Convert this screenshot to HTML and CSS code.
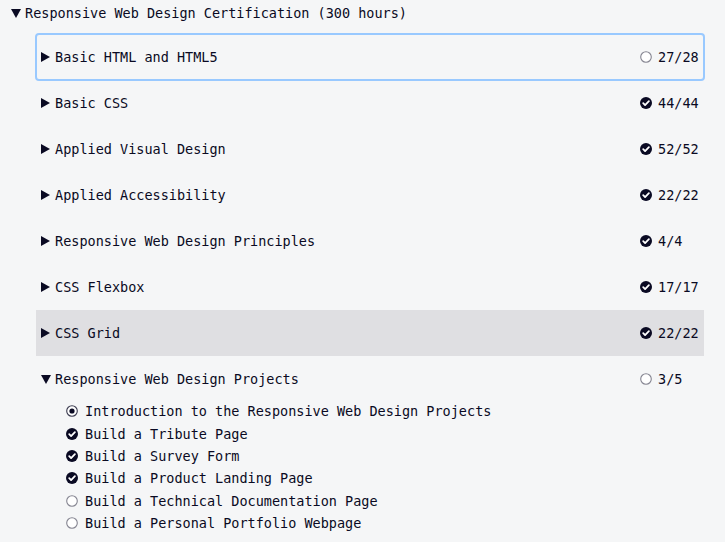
FILE: index.html
```html
<!DOCTYPE html>
<html>
<head>
<meta charset="utf-8">
<link rel="stylesheet" href="styles.css">
</head>
<body>
<div class="cert">
  <div class="cert-head">
    <svg class="tri-down" width="10" height="9" viewBox="0 0 10 9"><path d="M0 0H10L5 9Z"/></svg>
    <span>Responsive Web Design Certification (300 hours)</span>
  </div>
  <div class="blocks">
    <div class="block focused">
      <div class="block-title"><svg class="tri-right" width="9" height="10" viewBox="0 0 9 10"><path d="M0 0L9 5L0 10Z"/></svg><span>Basic HTML and HTML5</span></div>
      <div class="block-count"><svg class="ico" width="12" height="12" viewBox="0 0 12 12"><circle cx="6" cy="6" r="5.3" class="empty"/></svg><span>27/28</span></div>
    </div>
    <div class="block">
      <div class="block-title"><svg class="tri-right" width="9" height="10" viewBox="0 0 9 10"><path d="M0 0L9 5L0 10Z"/></svg><span>Basic CSS</span></div>
      <div class="block-count"><svg class="ico" width="12" height="12" viewBox="0 0 12 12"><circle cx="6" cy="6" r="6" class="full"/><path d="M3.2 6.2L5.1 8.1L8.9 4.2" class="tick"/></svg><span>44/44</span></div>
    </div>
    <div class="block">
      <div class="block-title"><svg class="tri-right" width="9" height="10" viewBox="0 0 9 10"><path d="M0 0L9 5L0 10Z"/></svg><span>Applied Visual Design</span></div>
      <div class="block-count"><svg class="ico" width="12" height="12" viewBox="0 0 12 12"><circle cx="6" cy="6" r="6" class="full"/><path d="M3.2 6.2L5.1 8.1L8.9 4.2" class="tick"/></svg><span>52/52</span></div>
    </div>
    <div class="block">
      <div class="block-title"><svg class="tri-right" width="9" height="10" viewBox="0 0 9 10"><path d="M0 0L9 5L0 10Z"/></svg><span>Applied Accessibility</span></div>
      <div class="block-count"><svg class="ico" width="12" height="12" viewBox="0 0 12 12"><circle cx="6" cy="6" r="6" class="full"/><path d="M3.2 6.2L5.1 8.1L8.9 4.2" class="tick"/></svg><span>22/22</span></div>
    </div>
    <div class="block">
      <div class="block-title"><svg class="tri-right" width="9" height="10" viewBox="0 0 9 10"><path d="M0 0L9 5L0 10Z"/></svg><span>Responsive Web Design Principles</span></div>
      <div class="block-count"><svg class="ico" width="12" height="12" viewBox="0 0 12 12"><circle cx="6" cy="6" r="6" class="full"/><path d="M3.2 6.2L5.1 8.1L8.9 4.2" class="tick"/></svg><span>4/4</span></div>
    </div>
    <div class="block">
      <div class="block-title"><svg class="tri-right" width="9" height="10" viewBox="0 0 9 10"><path d="M0 0L9 5L0 10Z"/></svg><span>CSS Flexbox</span></div>
      <div class="block-count"><svg class="ico" width="12" height="12" viewBox="0 0 12 12"><circle cx="6" cy="6" r="6" class="full"/><path d="M3.2 6.2L5.1 8.1L8.9 4.2" class="tick"/></svg><span>17/17</span></div>
    </div>
    <div class="block hovered">
      <div class="block-title"><svg class="tri-right" width="9" height="10" viewBox="0 0 9 10"><path d="M0 0L9 5L0 10Z"/></svg><span>CSS Grid</span></div>
      <div class="block-count"><svg class="ico" width="12" height="12" viewBox="0 0 12 12"><circle cx="6" cy="6" r="6" class="full"/><path d="M3.2 6.2L5.1 8.1L8.9 4.2" class="tick"/></svg><span>22/22</span></div>
    </div>
    <div class="block open">
      <div class="block-title tight"><svg class="tri-down-sm" width="10" height="9" viewBox="0 0 10 9"><path d="M0 0H10L5 9Z"/></svg><span>Responsive Web Design Projects</span></div>
      <div class="block-count"><svg class="ico" width="12" height="12" viewBox="0 0 12 12"><circle cx="6" cy="6" r="5.3" class="empty"/></svg><span>3/5</span></div>
    </div>
    <ul class="challenges">
      <li><svg class="ico" width="12" height="12" viewBox="0 0 12 12"><circle cx="6" cy="6" r="5.3" class="empty dark"/><circle cx="6" cy="6" r="2.6" class="dot"/></svg><span>Introduction to the Responsive Web Design Projects</span></li>
      <li><svg class="ico" width="12" height="12" viewBox="0 0 12 12"><circle cx="6" cy="6" r="6" class="full"/><path d="M3.2 6.2L5.1 8.1L8.9 4.2" class="tick"/></svg><span>Build a Tribute Page</span></li>
      <li><svg class="ico" width="12" height="12" viewBox="0 0 12 12"><circle cx="6" cy="6" r="6" class="full"/><path d="M3.2 6.2L5.1 8.1L8.9 4.2" class="tick"/></svg><span>Build a Survey Form</span></li>
      <li><svg class="ico" width="12" height="12" viewBox="0 0 12 12"><circle cx="6" cy="6" r="6" class="full"/><path d="M3.2 6.2L5.1 8.1L8.9 4.2" class="tick"/></svg><span>Build a Product Landing Page</span></li>
      <li><svg class="ico" width="12" height="12" viewBox="0 0 12 12"><circle cx="6" cy="6" r="5.3" class="empty"/></svg><span>Build a Technical Documentation Page</span></li>
      <li><svg class="ico" width="12" height="12" viewBox="0 0 12 12"><circle cx="6" cy="6" r="5.3" class="empty"/></svg><span>Build a Personal Portfolio Webpage</span></li>
    </ul>
  </div>
</div>
</body>
</html>
```
FILE: styles.css
```css
html, body {
  margin: 0;
  padding: 0;
  background: #f5f6f7;
}
body {
  font-family: "DejaVu Sans Mono", "Liberation Mono", monospace;
  font-size: 13.5px;
  color: #0a0a23;
  width: 725px;
  height: 542px;
  overflow: hidden;
}
.cert-head {
  display: flex;
  align-items: center;
  height: 26px;
  padding-left: 11px;
  gap: 4px;
}
.tri-down, .tri-down-sm, .tri-right {
  fill: #0a0a23;
  flex: none;
}
.blocks {
  margin: 8px 21px 0 36px;
}
.block {
  display: flex;
  align-items: center;
  justify-content: space-between;
  height: 46px;
  padding: 0 6px 0 5px;
}
.block.focused {
  outline: 2px solid #99c9ff;
  outline-offset: -1px;
  border-radius: 3px;
}
.block.hovered {
  background: #dfdfe2;
}
.block-title {
  display: flex;
  align-items: center;
  gap: 5px;
}
.block-title.tight {
  gap: 4px;
}
.block-count {
  display: flex;
  align-items: center;
  justify-content: flex-start;
  width: 58px;
  gap: 6px;
}
.ico {
  flex: none;
  display: block;
}
.ico .full { fill: #0a0a23; }
.ico .tick { fill: none; stroke: #fff; stroke-width: 1.8; stroke-linecap: round; stroke-linejoin: round; }
.ico .empty { fill: #fff; stroke: #858591; stroke-width: 1.1; }
.ico .empty.dark { stroke: #3b3b4f; }
.ico .dot { fill: #0a0a23; }
.challenges {
  list-style: none;
  margin: -2px 0 0 0;
  padding: 0 0 0 30px;
}
.challenges li {
  display: flex;
  align-items: center;
  gap: 7px;
  height: 22.4px;
}
```
